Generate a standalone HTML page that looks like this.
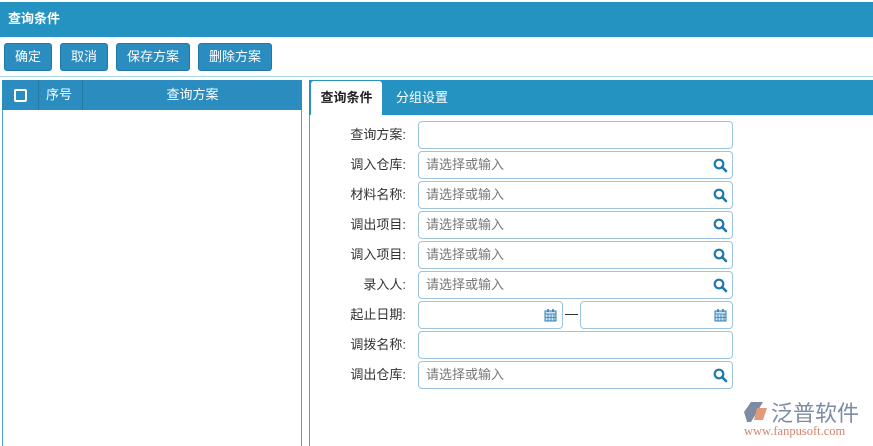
<!DOCTYPE html>
<html style="overflow:hidden;height:446px"><head><meta charset="utf-8"><style>
*{margin:0;padding:0;box-sizing:border-box}
body{width:873px;height:446px;overflow:hidden;background:#fff;font-family:"Liberation Sans","Noto Sans CJK SC",sans-serif;font-size:13px;color:#333;position:relative}
.title{position:absolute;left:0;top:2px;width:873px;height:35px;background:#2593c2;color:#fff;font-weight:bold;font-size:13px;line-height:33px;padding-left:8px}
.btn{position:absolute;top:43px;height:28px;background:#2a8cbf;border:1px solid #1f79a8;border-radius:3px;color:#fff;font-size:13px;line-height:26px;text-align:center}
.hr{position:absolute;left:0;top:76px;width:873px;height:1px;background:#a9d0e6}
.lp{position:absolute;left:2px;top:80px;width:300px;height:366px;border-left:1px solid #4aa3d2;border-right:1px solid #4aa3d2}
.lh{position:absolute;left:2px;top:80px;width:300px;height:30px;background:#2a8cbf;color:#fff;font-size:13px;line-height:30px}
.rp{position:absolute;left:309px;top:80px;width:2px;height:366px;border-left:1px solid #4aa3d2}
.tabbar{position:absolute;left:309px;top:80px;width:564px;height:35px;background:#2593c2}
.tab{position:absolute;top:81px;height:34px;line-height:34px;font-size:13px;text-align:center}
.lbl{position:absolute;left:330px;width:76px;text-align:right;font-size:13px;color:#333}
.inp{position:absolute;left:418px;width:315px;height:28px;border:1px solid #9cc4e2;border-radius:4px;background:#fff;color:#777;font-size:13px;line-height:26px;padding-left:7px}
.sr{position:absolute;right:4px;top:6px}
</style></head><body>
<div class="title">查询条件</div>
<div class="btn" style="left:4px;width:48px">确定</div>
<div class="btn" style="left:60px;width:48px">取消</div>
<div class="btn" style="left:116px;width:74px">保存方案</div>
<div class="btn" style="left:198px;width:74px">删除方案</div>
<div class="hr"></div>
<div class="lp"></div>
<div class="lh">
<div style="position:absolute;left:12px;top:9px;width:13px;height:13px;border:2px solid #fff;border-radius:2px"></div>
<div style="position:absolute;left:36px;top:0;width:1px;height:30px;background:#2478a3"></div>
<div style="position:absolute;left:44px">序号</div>
<div style="position:absolute;left:80px;top:0;width:1px;height:30px;background:#2478a3"></div>
<div style="position:absolute;left:81px;width:219px;text-align:center">查询方案</div>
</div>
<div class="rp"></div>
<div class="tabbar"></div>
<div class="tab" style="left:311px;width:71px;background:#fff;color:#222;font-weight:bold;border-radius:3px 3px 0 0">查询条件</div>
<div class="tab" style="left:384px;width:76px;color:#fff">分组设置</div>

<div class="lbl" style="top:124px">查询方案:</div><div class="inp" style="top:121px"></div>
<div class="lbl" style="top:154px">调入仓库:</div><div class="inp" style="top:151px">请选择或输入<svg class="sr" width="15" height="15" viewBox="0 0 15 15"><circle cx="6" cy="6" r="4.3" fill="none" stroke="#1f78ad" stroke-width="2.2"/><path d="M9 9l4 4" stroke="#1f78ad" stroke-width="2.6" stroke-linecap="round"/></svg></div>
<div class="lbl" style="top:184px">材料名称:</div><div class="inp" style="top:181px">请选择或输入<svg class="sr" width="15" height="15" viewBox="0 0 15 15"><circle cx="6" cy="6" r="4.3" fill="none" stroke="#1f78ad" stroke-width="2.2"/><path d="M9 9l4 4" stroke="#1f78ad" stroke-width="2.6" stroke-linecap="round"/></svg></div>
<div class="lbl" style="top:214px">调出项目:</div><div class="inp" style="top:211px">请选择或输入<svg class="sr" width="15" height="15" viewBox="0 0 15 15"><circle cx="6" cy="6" r="4.3" fill="none" stroke="#1f78ad" stroke-width="2.2"/><path d="M9 9l4 4" stroke="#1f78ad" stroke-width="2.6" stroke-linecap="round"/></svg></div>
<div class="lbl" style="top:244px">调入项目:</div><div class="inp" style="top:241px">请选择或输入<svg class="sr" width="15" height="15" viewBox="0 0 15 15"><circle cx="6" cy="6" r="4.3" fill="none" stroke="#1f78ad" stroke-width="2.2"/><path d="M9 9l4 4" stroke="#1f78ad" stroke-width="2.6" stroke-linecap="round"/></svg></div>
<div class="lbl" style="top:274px">录入人:</div><div class="inp" style="top:271px">请选择或输入<svg class="sr" width="15" height="15" viewBox="0 0 15 15"><circle cx="6" cy="6" r="4.3" fill="none" stroke="#1f78ad" stroke-width="2.2"/><path d="M9 9l4 4" stroke="#1f78ad" stroke-width="2.6" stroke-linecap="round"/></svg></div>
<div class="lbl" style="top:304px">起止日期:</div>
<div class="inp" style="top:301px;width:145px"><svg class="sr" width="13" height="14" viewBox="0 0 13 14" style="top:6px;right:5px"><rect x="1" y="3" width="11" height="10" fill="#cfe3f3" stroke="#2a7fb5"/><path d="M1 6h11M4 6v7M7 6v7M10 6v7M1 9.5h11" stroke="#2a7fb5" stroke-width=".8"/><path d="M4 1v3M9 1v3" stroke="#2a7fb5" stroke-width="1.5"/></svg></div>
<div style="position:absolute;left:565px;top:314px;width:13px;height:1px;background:#333"></div>
<div class="inp" style="top:301px;left:580px;width:153px"><svg class="sr" width="13" height="14" viewBox="0 0 13 14" style="top:6px;right:5px"><rect x="1" y="3" width="11" height="10" fill="#cfe3f3" stroke="#2a7fb5"/><path d="M1 6h11M4 6v7M7 6v7M10 6v7M1 9.5h11" stroke="#2a7fb5" stroke-width=".8"/><path d="M4 1v3M9 1v3" stroke="#2a7fb5" stroke-width="1.5"/></svg></div>
<div class="lbl" style="top:334px">调拨名称:</div><div class="inp" style="top:331px"></div>
<div class="lbl" style="top:364px">调出仓库:</div><div class="inp" style="top:361px">请选择或输入<svg class="sr" width="15" height="15" viewBox="0 0 15 15"><circle cx="6" cy="6" r="4.3" fill="none" stroke="#1f78ad" stroke-width="2.2"/><path d="M9 9l4 4" stroke="#1f78ad" stroke-width="2.6" stroke-linecap="round"/></svg></div>

<svg style="position:absolute;left:743px;top:400px" width="28" height="26" viewBox="0 0 28 26"><path d="M8 2h12l-6 10-6 10H4L1 12z" fill="#7d8ba3"/><path d="M14 8h10l-4 12h-9z" fill="#e29a7a"/></svg>
<div style="position:absolute;left:771px;top:396px;font-size:22px;color:#7d8ba3">泛普软件</div>
<div style="position:absolute;left:744px;top:424px;font-size:12.5px;color:#d5836a;font-family:'Liberation Serif',serif">www.fanpusoft.com</div>
</body></html>
